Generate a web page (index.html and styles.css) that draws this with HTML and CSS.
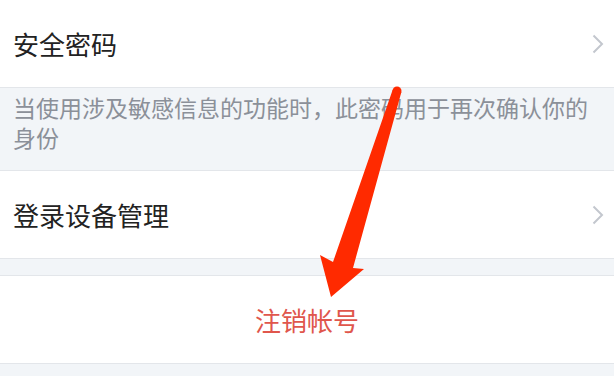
FILE: index.html
```html
<!DOCTYPE html>
<html lang="zh-CN">
<head>
<meta charset="utf-8">
<title>帐号与安全</title>
<link rel="stylesheet" href="styles.css">
</head>
<body>
<div class="page">
  <div class="row">
    <span class="row-title">安全密码</span>
    <svg class="chevron" width="12" height="20" viewBox="0 0 12 20"><path d="M1.5 1.5 L10 10 L1.5 18.5" fill="none" stroke="#c3c7ce" stroke-width="2"/></svg>
  </div>
  <div class="desc">当使用涉及敏感信息的功能时，此密码用于再次确认你的身份</div>
  <div class="row">
    <span class="row-title">登录设备管理</span>
    <svg class="chevron" width="12" height="20" viewBox="0 0 12 20"><path d="M1.5 1.5 L10 10 L1.5 18.5" fill="none" stroke="#c3c7ce" stroke-width="2"/></svg>
  </div>
  <div class="gap"></div>
  <div class="row row-center">
    <span class="danger">注销帐号</span>
  </div>
  <svg class="arrow" width="614" height="376" viewBox="0 0 614 376">
    <circle cx="397" cy="91" r="4.5" fill="#ff2a00"/>
    <polygon points="392.6,90 401.4,92 353,268 364,269 331,297 320,255 333,262" fill="#ff2a00"/>
  </svg>
</div>
</body>
</html>
```

FILE: styles.css
```css
* { box-sizing: border-box; }
html, body { margin: 0; padding: 0; }
body {
  background: #f2f5f8;
  font-family: "Noto Sans CJK SC", "Noto Sans", sans-serif;
  width: 614px;
  height: 376px;
  overflow: hidden;
}
.page {
  position: relative;
  width: 614px;
  height: 376px;
}
.row {
  height: 88px;
  background: #ffffff;
  border-bottom: 1px solid #e3e6ea;
  display: flex;
  align-items: center;
  justify-content: space-between;
  padding: 0 10px 0 13px;
}
.row-title {
  font-size: 26px;
  color: #222222;
  line-height: 1;
}
.chevron { display: block; }
.desc {
  height: 83px;
  padding: 4px 20px 0 13px;
  font-size: 23px;
  line-height: 30px;
  color: #8b9099;
  border-bottom: 1px solid #e3e6ea;
}
.gap {
  height: 17px;
  border-bottom: 1px solid #e3e6ea;
}
.row-center {
  justify-content: center;
  padding: 0 0 0 0;
}
.danger {
  font-size: 26px;
  color: #e0564c;
  line-height: 1;
}
.arrow {
  position: absolute;
  left: 0;
  top: 0;
  pointer-events: none;
}
```
